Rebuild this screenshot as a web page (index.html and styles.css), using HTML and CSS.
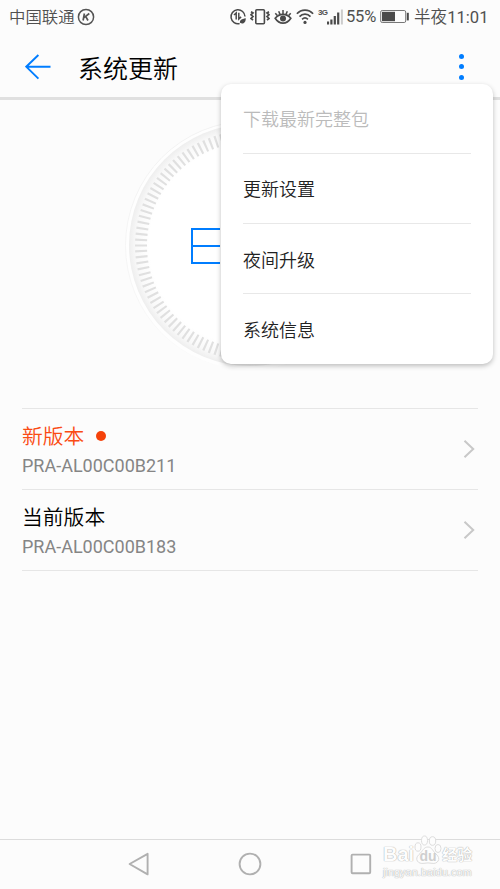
FILE: index.html
```html
<!DOCTYPE html>
<html lang="zh-CN">
<head>
    <title>系统更新</title>
    <meta charset="utf-8">
    <meta name="viewport" content="width=device-width, initial-scale=1">
    <link rel="stylesheet" href="styles.css">
</head>
<body>
    <div class="statusbar">
        <span class="carrier">中国联通</span>
        <svg class="k-icon" width="18" height="18" viewBox="0 0 18 18">
            <circle cx="9" cy="9" r="7.6" fill="none" stroke="#555" stroke-width="1.5"/>
            <path d="M7.4 5.5L6.1 12.5M12.3 5.5L7 9.6M8.8 8.6L11 12.5" fill="none" stroke="#555" stroke-width="1.7"/>
        </svg>
        <div class="status-icons">
            <!-- data saver -->
            <svg class="saver" width="20" height="20" viewBox="0 0 20 20">
                <path d="M10.6 16.6A7 7 0 1 1 16 9.5" fill="none" stroke="#4a4a4a" stroke-width="1.5"/>
                <path d="M5 8L7.2 6V12.4M9.8 5.8V12L12.1 9.9" fill="none" stroke="#4a4a4a" stroke-width="1.5"/>
                <path d="M11 15.8C10.6 12.8 12.6 12 16.8 11.2C16.8 14.8 14.8 17.8 11 15.8Z" fill="#4a4a4a"/>
            </svg>
            <!-- vibrate -->
            <svg width="20" height="20" viewBox="0 0 20 20">
                <rect x="5.8" y="2.8" width="8.6" height="14" rx="1" fill="none" stroke="#4a4a4a" stroke-width="1.6"/>
                <path d="M1 4.8L3 6L1 7.8L3 9.6L1 11.4L3 13.2M19 4.8L17 6L19 7.8L17 9.6L19 11.4L17 13.2" fill="none" stroke="#4a4a4a" stroke-width="1.7"/>
            </svg>
            <!-- eye comfort -->
            <svg class="eye" width="18" height="20" viewBox="0 0 18 20">
                <path d="M1.2 11.3C5.3 6.1 12.7 6.1 16.8 11.3C12.7 17.8 5.3 17.8 1.2 11.3Z" fill="none" stroke="#4a4a4a" stroke-width="1.7"/>
                <circle cx="9" cy="11.5" r="3" fill="#4a4a4a"/>
                <path d="M9 3V7M4.7 4.2L6 7.4M13.3 4.2L12 7.4M1.3 6.2L3.3 8.6M16.7 6.2L14.7 8.6" stroke="#4a4a4a" stroke-width="1.5"/>
            </svg>
            <!-- wifi -->
            <svg class="wifi" width="18" height="20" viewBox="0 0 18 20">
                <path d="M0.9 6.8C5.3 1.8 12.7 1.8 17.1 6.8M3.5 9.6C6.6 6.3 11.4 6.3 14.5 9.6M6.1 12.4C7.8 10.7 10.2 10.7 11.9 12.4" fill="none" stroke="#4a4a4a" stroke-width="1.7"/>
                <circle cx="9" cy="15.4" r="1.6" fill="#4a4a4a"/>
            </svg>
            <span class="net">3G</span>
            <!-- signal -->
            <svg width="16" height="20" viewBox="0 0 16 20">
                <path d="M1 14.5V17.5M4.4 12.5V17.5M7.8 9V17.5M11.2 5.5V17.5" stroke="#4a4a4a" stroke-width="2.2"/>
                <path d="M14.9 2.5V17.5" stroke="#ccc" stroke-width="2"/>
            </svg>
            <span class="percent">55%</span>
            <svg class="battery" width="30" height="20" viewBox="0 0 30 20">
                <rect x="0.7" y="3.5" width="25" height="12" rx="1.5" fill="none" stroke="#777" stroke-width="1"/>
                <rect x="2" y="4.8" width="13" height="9.4" fill="#4a4a4a"/>
                <rect x="26.8" y="5.8" width="2" height="7.6" fill="#4a4a4a"/>
            </svg>
            <span class="time">半夜<span class="clock">11:01</span></span>
        </div>
    </div>

    <div class="header">
        <svg class="back" width="26" height="26" viewBox="0 0 26 26">
            <path d="M13.4 1L1.2 12.7L13.4 24.6M1.2 12.7H25.5" fill="none" stroke="#007dff" stroke-width="1.9"/>
        </svg>
        <h1>系统更新</h1>
        <div class="more">
            <i></i><i></i><i></i>
            <div class="menu">
                <div class="menu-item disabled">下载最新完整包</div>
                <div class="menu-item">更新设置</div>
                <div class="menu-item">夜间升级</div>
                <div class="menu-item">系统信息</div>
            </div>
        </div>
    </div>

    <div class="dial">
        <svg width="254" height="254" viewBox="-127 -127 254 254">
            <defs>
                <radialGradient id="ring" gradientUnits="userSpaceOnUse" cx="0" cy="-1" r="121">
                    <stop offset="0.83" stop-color="#fff"/>
                    <stop offset="0.94" stop-color="#f9f9f9"/>
                    <stop offset="1" stop-color="#eee"/>
                </radialGradient>
                <linearGradient id="rim" x1="0" y1="0" x2="0" y2="1">
                    <stop offset="0" stop-color="#f2f2f2"/>
                    <stop offset="0.7" stop-color="#f6f6f6"/>
                    <stop offset="1" stop-color="#fcfcfc"/>
                </linearGradient>
            </defs>
            <circle cy="-0.5" r="124.5" fill="#fefefe" stroke="url(#rim)"/>
            <circle cy="-1" r="121" fill="url(#ring)"/>
            <circle cy="-0.5" r="109" fill="none" stroke="#e0e0e0" stroke-width="12" pathLength="1200" stroke-dasharray="3.8 6.2" stroke-dashoffset="1.9"/>
            <path d="M-30 -17H-58V17H-30M-58 0H-30" fill="none" stroke="#007dff" stroke-width="2"/>
        </svg>
    </div>

    <div class="versions">
        <div class="row">
            <div>
                <div class="name new">新版本<span class="dot"></span></div>
                <div class="number">PRA-AL00C00B211</div>
            </div>
            <svg width="12" height="20" viewBox="0 0 12 20">
                <path d="M1.5 1.8L10.2 10L1.5 18.2" fill="none" stroke="#c8c8c8" stroke-width="2"/>
            </svg>
        </div>
        <div class="row">
            <div>
                <div class="name">当前版本</div>
                <div class="number">PRA-AL00C00B183</div>
            </div>
            <svg width="12" height="20" viewBox="0 0 12 20">
                <path d="M1.5 1.8L10.2 10L1.5 18.2" fill="none" stroke="#c8c8c8" stroke-width="2"/>
            </svg>
        </div>
    </div>

    <div class="navbar">
        <svg width="24" height="24" viewBox="0 0 24 24">
            <path d="M20.6 1.8V22.4L2.6 12Z" fill="none" stroke="#b0b0b0" stroke-width="1.9" stroke-linejoin="round"/>
        </svg>
        <svg width="24" height="24" viewBox="0 0 24 24">
            <circle cx="12" cy="12" r="10.4" fill="none" stroke="#b0b0b0" stroke-width="1.9"/>
        </svg>
        <svg width="24" height="24" viewBox="0 0 24 24">
            <rect x="2.6" y="2.6" width="18.6" height="18.6" rx="1" fill="none" stroke="#b0b0b0" stroke-width="1.9"/>
        </svg>
        <div class="watermark">
            <div class="brand">
                <span>Bai</span>
                <svg width="28" height="30" viewBox="0 0 28 30">
                    <g fill="#fdfdfd" stroke="#ddd">
                        <ellipse cx="4" cy="12" rx="3" ry="4.2"/>
                        <ellipse cx="10.5" cy="5.5" rx="3" ry="4.5"/>
                        <ellipse cx="18.5" cy="6" rx="3.2" ry="4.3"/>
                        <ellipse cx="24" cy="13.5" rx="3" ry="4"/>
                        <path d="M14 12C18 12 18.5 16 22 19C28 24 23 29.5 18 28.3Q14 27.5 10 28.3C4 29.5 0 24 5 19.5C9 16 9.5 12 14 12Z"/>
                    </g>
                    <text class="du" x="14" y="26" text-anchor="middle">du</text>
                </svg>
                <span class="jy">经验</span>
            </div>
            <div class="site">jingyan.baidu.com</div>
        </div>
    </div>
</body>
</html>
```
FILE: styles.css
```css
* {
    box-sizing: border-box;
}

body {
    margin: 0;
    height: 889px;
    display: flex;
    flex-direction: column;
    background-color: #fcfcfc;
    font-family: Roboto, "Noto Sans CJK SC", sans-serif;
    font-weight: 350;
    color: #000;
    overflow: hidden;
}

svg {
    display: block;
    flex-shrink: 0;
}

.statusbar {
    height: 34px;
    padding: 0 10px 0 9px;
    display: flex;
    align-items: center;
    color: #505050;
    font-size: 16.4px;
    line-height: 34px;
    white-space: nowrap;
}

.carrier {
    margin-top: 2px;
}

.k-icon {
    margin-left: 2px;
}

.status-icons {
    margin-left: auto;
    display: flex;
    align-items: center;
}

.saver {
    margin-right: 1px;
}

.eye {
    margin-left: 4px;
}

.wifi {
    margin-left: 4px;
}

.net {
    width: 9px;
    margin-left: 4px;
    font-family: "Liberation Sans", sans-serif;
    font-size: 8px;
    font-weight: bold;
    line-height: 10px;
    letter-spacing: -0.8px;
    margin-bottom: 9px;
}

.percent {
    width: 31px;
    margin-left: 3px;
    font-size: 16.5px;
    font-weight: 400;
    letter-spacing: -0.2px;
}

.battery {
    margin-left: 3px;
}

.time {
    width: 76px;
    margin-top: 2px;
    margin-left: 4px;
    font-size: 16.6px;
}

.clock {
    font-weight: 400;
}

.header {
    height: 66px;
    padding: 0 36px 0 25px;
    display: flex;
    align-items: center;
    border-bottom: 3px solid #e0e0e0;
}

.back {
    margin-top: 2px;
}

.header h1 {
    margin: 8px 0 0 27px;
    font-size: 25px;
    font-weight: 350;
    line-height: 36px;
}

.more {
    position: relative;
    height: 26px;
    margin-left: auto;
    margin-top: 2px;
    display: flex;
    flex-direction: column;
    justify-content: space-between;
}

.more i {
    width: 5px;
    height: 5px;
    border-radius: 50%;
    background-color: #007dff;
}

.menu {
    position: absolute;
    top: 30px;
    right: -29px;
    z-index: 2;
    width: 272px;
    height: 280px;
    padding: 0 22px;
    display: flex;
    flex-direction: column;
    background-color: #fff;
    border-radius: 10px;
    box-shadow: 0 2px 5px rgba(0, 0, 0, 0.25);
}

.menu-item {
    flex: 1;
    display: flex;
    align-items: center;
    border-bottom: 1px solid #e8e8e8;
    font-size: 18px;
    color: #222;
}

.menu-item:last-child {
    border-bottom: none;
}

.disabled {
    color: #bbb;
}

.dial {
    height: 308px;
    padding-top: 19px;
    display: flex;
    justify-content: center;
}

.versions {
    margin: 0 22px;
    border-top: 1px solid #e6e6e6;
}

.row {
    height: 81px;
    padding-right: 3px;
    display: flex;
    align-items: center;
    justify-content: space-between;
    border-bottom: 1px solid #e6e6e6;
}

.name {
    display: flex;
    align-items: center;
    margin-top: 3px;
    font-size: 20.8px;
    line-height: 30px;
}

.new {
    color: #fa4b14;
}

.dot {
    width: 10px;
    height: 10px;
    margin-left: 12px;
    margin-bottom: 3px;
    border-radius: 50%;
    background-color: #f5420a;
}

.number {
    font-size: 18px;
    font-weight: 400;
    line-height: 27px;
    color: #858585;
}

.navbar {
    position: relative;
    height: 50px;
    margin-top: auto;
    padding: 0 0 2px 127px;
    display: flex;
    align-items: center;
    gap: 87px;
    border-top: 1px solid #dcdcdc;
}

/* sits over the right end of the navigation bar */
.watermark {
    position: absolute;
    left: 383px;
    top: -6px;
    color: #fdfdfd;
    text-shadow: 0 0 1px #aaa, 0 0 1px #bbb;
}

.brand {
    display: flex;
    align-items: flex-end;
    height: 31px;
    font-family: "Liberation Sans", sans-serif;
    font-size: 20px;
    font-weight: bold;
    line-height: 22px;
}

.du {
    font-size: 14px;
    fill: #cfcfcf;
    text-shadow: none;
}

.jy {
    font-family: "Noto Sans CJK SC", sans-serif;
    font-size: 15px;
}

.site {
    font-family: "Liberation Sans", sans-serif;
    font-size: 11px;
    font-weight: 400;
    line-height: 14px;
}
```
